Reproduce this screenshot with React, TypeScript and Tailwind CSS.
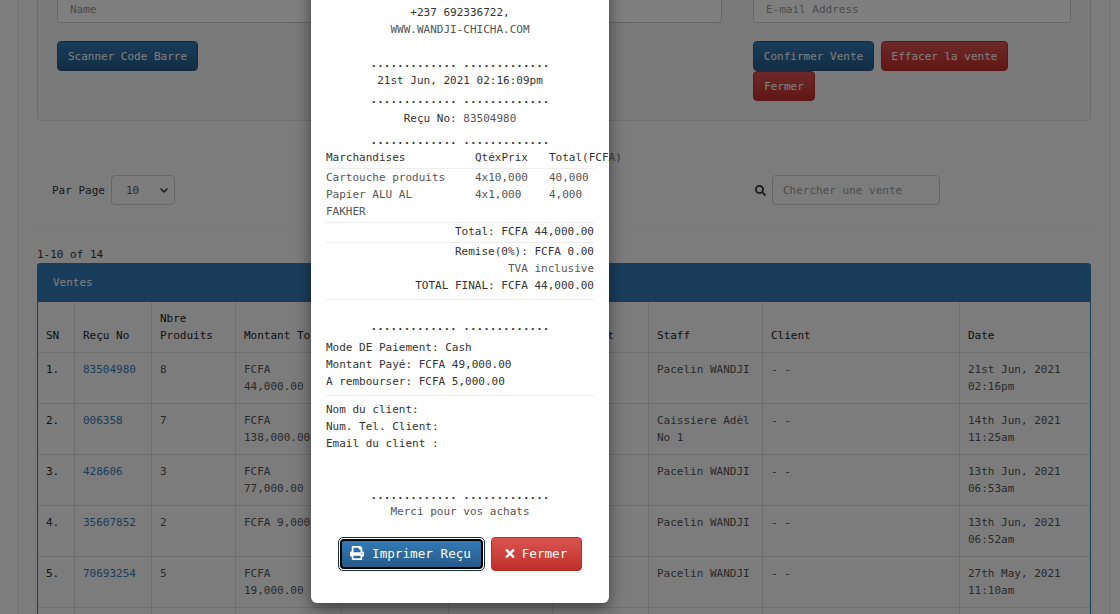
import { FaPrint, FaSearch, FaTimes, FaChevronDown } from "react-icons/fa";

const mono = "font-['DejaVu_Sans_Mono',monospace]";

const ROWS = [
  { n: "1.", recu: "83504980", qty: "8", total: ["FCFA", "44,000.00"], staff: ["Pacelin WANDJI"], date: ["21st Jun, 2021", "02:16pm"] },
  { n: "2.", recu: "006358", qty: "7", total: ["FCFA", "138,000.00"], staff: ["Caissiere Adèl", "No 1"], date: ["14th Jun, 2021", "11:25am"] },
  { n: "3.", recu: "428606", qty: "3", total: ["FCFA", "77,000.00"], staff: ["Pacelin WANDJI"], date: ["13th Jun, 2021", "06:53am"] },
  { n: "4.", recu: "35607852", qty: "2", total: ["FCFA 9,000.00"], staff: ["Pacelin WANDJI"], date: ["13th Jun, 2021", "06:52am"] },
  { n: "5.", recu: "70693254", qty: "5", total: ["FCFA", "19,000.00"], staff: ["Pacelin WANDJI"], date: ["27th May, 2021", "11:10am"] },
];

const COLS = ["w-[37px]", "w-[77px]", "w-[84px]", "w-[106px]", "w-[107px]", "w-[104px]", "w-[96px]", "w-[114px]", "w-[197px]"];

const Dots = ({ className = "" }: { className?: string }) => (
  <p className={`text-center font-bold text-[#333] ${className}`}>............. .............</p>
);

const Td = ({ w, children, className = "" }: { w: string; children?: React.ReactNode; className?: string }) => (
  <div className={`${w} shrink-0 border-r border-[#ddd] px-2 py-2 ${className}`}>{children}</div>
);

const Th = ({ w, children }: { w: string; children?: React.ReactNode }) => (
  <Td w={w} className="flex items-end text-[#222]">
    <span>{children}</span>
  </Td>
);

export default function App() {
  return (
    <div className={`relative h-[614px] overflow-hidden bg-white text-[11px] leading-[17px] text-[#333] ${mono}`}>
      <div className="-mt-[40px] ml-[17px] mr-[9px] border-x border-[#e7e7e7] bg-[#f9f9f9] px-[19px] pt-[20px]">
        {/* formulaire */}
        <div className="rounded border border-[#ddd] bg-[#f5f5f5] px-[19px] pt-[12px] pb-[19px]">
          <div className="flex gap-[31px]">
            <div className="h-[30px] w-[665px] rounded border border-[#ccc] bg-white px-3 py-[7px] text-[#999]">Name</div>
            <div className="h-[30px] w-[318px] rounded border border-[#ccc] bg-white px-3 py-[7px] text-[#999]">E-mail Address</div>
          </div>
          <div className="mt-[18px] flex gap-[31px]">
            <div className="w-[665px]">
              <button className="h-[30px] w-[141px] rounded border border-[#245580] bg-gradient-to-b from-[#337ab7] to-[#265a88] text-white">Scanner Code Barre</button>
            </div>
            <div className="flex w-[318px] flex-wrap gap-x-[7px]">
              <button className="h-[30px] w-[121px] rounded border border-[#245580] bg-gradient-to-b from-[#337ab7] to-[#265a88] text-white">Confirmer Vente</button>
              <button className="h-[30px] w-[127px] rounded border border-[#b92c28] bg-gradient-to-b from-[#d9534f] to-[#c12e2a] text-white">Effacer la vente</button>
              <button className="h-[30px] w-[62px] rounded border border-[#b92c28] bg-gradient-to-b from-[#d9534f] to-[#c12e2a] text-white">Fermer</button>
            </div>
          </div>
        </div>

        {/* filtres */}
        <div className="mt-[54px] flex h-[30px] items-center pl-[15px]">
          <span>Par Page</span>
          <div className="ml-[6px] flex h-[30px] w-[64px] items-center justify-between rounded border border-[#ccc] bg-[#f9f9f9] pl-[14px] pr-[5px] text-[#555]">
            10
            <FaChevronDown className="h-[9px] w-[10px] text-[#333]" />
          </div>
          <FaSearch className="ml-[580px] h-[11px] w-[11px] text-[#333]" />
          <div className="ml-[6px] h-[30px] w-[168px] rounded border border-[#ccc] bg-[#f9f9f9] px-[10px] py-[6px] text-[#999]">Chercher une vente</div>
        </div>
        <div className="mt-[20px] border-t border-[#eee]" />
        <p className="mt-[20px]">1-10 of 14</p>

        {/* ventes */}
        <div className="rounded-t border-x border-[#337ab7]">
          <div className="-mx-px flex h-[39px] items-center rounded-t bg-[#337ab7] px-[16px] text-white">Ventes</div>
          <div className="flex border-b border-[#ddd]">
            <Th w="w-[37px]">SN</Th>
            <Th w="w-[77px]">Reçu No</Th>
            <Th w="w-[84px]">Nbre<br />Produits</Th>
            <Th w="w-[106px]">Montant Total</Th>
            <Th w="w-[107px]" />
            <Th w="w-[104px]" />
            <Th w="w-[96px]">Paiement</Th>
            <Th w="w-[114px]">Staff</Th>
            <Th w="w-[197px]">Client</Th>
            <div className="flex flex-1 items-end p-2 text-[#222]">Date</div>
          </div>
          {ROWS.map((r) => (
            <div key={r.n} className="flex h-[51px] border-b border-[#ddd] text-[#555]">
              <Td w="w-[37px]" className="text-[#222]">{r.n}</Td>
              <Td w="w-[77px]" className="text-[#337ab7]">{r.recu}</Td>
              <Td w="w-[84px]">{r.qty}</Td>
              <Td w="w-[106px]">{r.total.map((t) => <div key={t}>{t}</div>)}</Td>
              <Td w="w-[107px]" />
              <Td w="w-[104px]" />
              <Td w="w-[96px]" />
              <Td w="w-[114px]">{r.staff.map((t) => <div key={t}>{t}</div>)}</Td>
              <Td w="w-[197px]">- -</Td>
              <div className="flex-1 p-2">{r.date.map((t) => <div key={t}>{t}</div>)}</div>
            </div>
          ))}
          {/* ligne suivante, coupée par le bas de la fenêtre */}
          <div className="flex h-[51px]">
            {COLS.map((w) => <Td key={w} w={w} />)}
          </div>
        </div>
      </div>

      {/* modal */}
      <div className="absolute inset-0 bg-black/50" />
      <div className="absolute left-[311px] top-[-20px] bottom-[11px] w-[298px] rounded-md bg-white px-[15px] pt-[24px] text-[#555] shadow-[0_5px_15px_rgba(0,0,0,0.5)]">
        <p className="text-center text-[#333]">+237 692336722,</p>
        <p className="text-center">WWW.WANDJI-CHICHA.COM</p>
        <Dots className="mt-[17px]" />
        <p className="text-center text-[#333]">21st Jun, 2021 02:16:09pm</p>
        <Dots className="mt-[2px]" />
        <p className="mt-[2px] text-center"><span className="text-[#333]">Reçu No:</span> 83504980</p>
        <Dots className="mt-[5px]" />
        <div className="flex border-b border-[#eee] pb-[2px] text-[#333]">
          <span className="w-[149px] shrink-0">Marchandises</span>
          <span className="w-[74px] shrink-0">QtéxPrix</span>
          <span className="shrink-0 whitespace-nowrap">Total(FCFA)</span>
        </div>
        <div className="flex">
          <span className="w-[149px] shrink-0">Cartouche produits</span>
          <span className="w-[74px] shrink-0">4x10,000</span>
          <span>40,000</span>
        </div>
        <div className="flex border-b border-[#eee] pb-[2px]">
          <span className="w-[149px] shrink-0">Papier ALU AL<br />FAKHER</span>
          <span className="w-[74px] shrink-0">4x1,000</span>
          <span>4,000</span>
        </div>
        <p className="border-b border-[#eee] pb-[2px] text-right text-[#333]">Total: FCFA 44,000.00</p>
        <div className="border-b border-[#eee] pb-[5px] text-right">
          <p className="text-[#333]">Remise(0%): FCFA 0.00</p>
          <p>TVA inclusive</p>
          <p className="text-[#333]">TOTAL FINAL: FCFA 44,000.00</p>
        </div>
        <Dots className="mt-[18px]" />
        <div className="mt-[4px] border-b border-[#eee] pb-[5px] text-[#333]">
          <p>Mode DE Paiement: Cash</p>
          <p>Montant Payé: FCFA 49,000.00</p>
          <p>A rembourser: FCFA 5,000.00</p>
        </div>
        <div className="pt-[5px] text-[#333]">
          <p>Nom du client:</p>
          <p>Num. Tel. Client:</p>
          <p>Email du client :</p>
        </div>
        <Dots className="mt-[35px]" />
        <p className="-mt-px text-center">Merci pour vos achats</p>
        <div className="mt-[17px] flex items-center">
          <button className="ml-[12px] h-[34px] w-[147px] rounded-[5px] border border-[#122b40] bg-white p-[1px]">
            <span className="flex h-full w-full items-center justify-center gap-[8px] rounded-[4px] border-2 border-black bg-gradient-to-b from-[#337ab7] to-[#265a88] pb-[2px] pr-[2px] text-[12.65px] text-white">
              <FaPrint className="h-[14px] w-[14px]" />
              Imprimer Reçu
            </span>
          </button>
          <button className="ml-[6px] flex h-[34px] w-[91px] items-center justify-center gap-[6px] rounded-[4px] border border-[#b92c28] bg-gradient-to-b from-[#d9534f] to-[#c12e2a] pb-[2px] pr-[2px] text-[12.65px] text-white">
            <FaTimes className="h-[13px] w-[12px]" />
            Fermer
          </button>
        </div>
      </div>
    </div>
  );
}
